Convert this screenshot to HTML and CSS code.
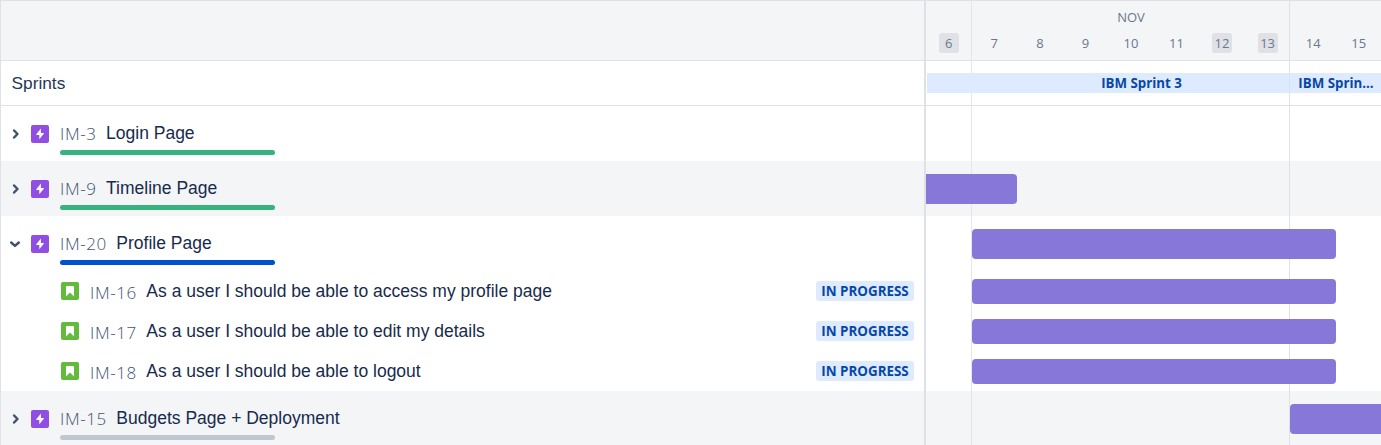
FILE: index.html
```html
<!DOCTYPE html>
<html lang="en">
<head>
<meta charset="utf-8">
<title>Roadmap</title>
<link rel="stylesheet" href="styles.css">
</head>
<body>
<svg class="defs" width="0" height="0" aria-hidden="true">
  <symbol id="right" viewBox="0 0 12 12"><path d="M5.100 2.500 8.500 6 5.100 9.500" fill="none" stroke="#42526e" stroke-width="2.5" stroke-linecap="round" stroke-linejoin="round"/></symbol>
  <symbol id="down" viewBox="0 0 12 12"><path d="M2.200 4.500 6 7.900 9.800 4.500" fill="none" stroke="#42526e" stroke-width="2.5" stroke-linecap="round" stroke-linejoin="round"/></symbol>
  <symbol id="epic" viewBox="0 0 18 18"><rect width="18" height="18" rx="2" fill="#904ee2"/><path d="M9.900 3.500v4.500h2.500q.9 0 .4.8l-4.500 5.500V10H5.700q-.8 0-.4-.8z" fill="#fff"/></symbol>
  <symbol id="story" viewBox="0 0 18 18"><rect width="18" height="18" rx="2" fill="#63ba3c"/><path d="M6 4h6q1 0 1 1v9.600L9 10.500 5 14.600V5q0-1 1-1z" fill="#fff"/></symbol>
</svg>
<main class="roadmap">
  <div class="row header">
    <div class="side"></div>
    <div class="track">
      <div class="month">NOV</div>
      <div class="days"><span><b>6</b></span><span>7</span><span>8</span><span>9</span><span>10</span><span>11</span><span><b>12</b></span><span><b>13</b></span><span>14</span><span>15</span></div>
    </div>
  </div>
  <div class="row sprints">
    <div class="side">Sprints</div>
    <div class="track"><div class="sprint first">IBM Sprint 3</div><div class="sprint second">IBM Sprin...</div></div>
  </div>
  <div class="row epic">
    <div class="side"><svg class="chev"><use href="#right"/></svg><svg class="type"><use href="#epic"/></svg>
      <div class="info"><div class="line"><span class="key">IM-3</span><span class="title">Login Page</span></div><div class="progress done"></div></div></div>
    <div class="track"></div>
  </div>
  <div class="row epic shade">
    <div class="side"><svg class="chev"><use href="#right"/></svg><svg class="type"><use href="#epic"/></svg>
      <div class="info"><div class="line"><span class="key">IM-9</span><span class="title">Timeline Page</span></div><div class="progress done"></div></div></div>
    <div class="track"><div class="bar from-start"></div></div>
  </div>
  <div class="row epic">
    <div class="side"><svg class="chev"><use href="#down"/></svg><svg class="type"><use href="#epic"/></svg>
      <div class="info"><div class="line"><span class="key">IM-20</span><span class="title">Profile Page</span></div><div class="progress active"></div></div></div>
    <div class="track"><div class="bar middle"></div></div>
  </div>
  <div class="row story">
    <div class="side"><svg class="type"><use href="#story"/></svg><span class="key">IM-16</span><span class="title">As a user I should be able to access my profile page</span><span class="status">IN PROGRESS</span></div>
    <div class="track"><div class="bar middle"></div></div>
  </div>
  <div class="row story">
    <div class="side"><svg class="type"><use href="#story"/></svg><span class="key">IM-17</span><span class="title">As a user I should be able to edit my details</span><span class="status">IN PROGRESS</span></div>
    <div class="track"><div class="bar middle"></div></div>
  </div>
  <div class="row story">
    <div class="side"><svg class="type"><use href="#story"/></svg><span class="key">IM-18</span><span class="title">As a user I should be able to logout</span><span class="status">IN PROGRESS</span></div>
    <div class="track"><div class="bar middle"></div></div>
  </div>
  <div class="row epic shade">
    <div class="side"><svg class="chev"><use href="#right"/></svg><svg class="type"><use href="#epic"/></svg>
      <div class="info"><div class="line"><span class="key">IM-15</span><span class="title">Budgets Page + Deployment</span></div><div class="progress todo"></div></div></div>
    <div class="track"><div class="bar late"></div></div>
  </div>
</main>
</body>
</html>
```
FILE: styles.css
```css
* { box-sizing: border-box; }
body { margin: 0; overflow: hidden; background: #fff; }
.defs { display: block; }
.roadmap {
  height: 445px;
  overflow: hidden;
  border-top: 1px solid #dfe1e6;
  border-left: 1px solid #dfe1e6;
  font-family: "Liberation Sans", Arial, sans-serif;
  font-size: 17.5px;
  color: #172b4d;
}
.row { display: grid; grid-template-columns: 925px 1fr; }
.side { display: flex; align-items: center; border-right: 2px solid #dfe1e6; min-width: 0; }
.track {
  display: flex;
  align-items: center;
  min-width: 0;
  overflow: hidden;
  background:
    linear-gradient(#e4e6ea, #e4e6ea) 45px 0 / 1px 100% no-repeat,
    linear-gradient(#dfe1e6, #dfe1e6) 363px 0 / 1px 100% no-repeat;
}
.shade { background-color: #f4f5f7; }

.header { height: 60px; background-color: #f4f5f7; border-bottom: 1px solid #dfe1e6; }
.header .track {
  display: block;
  font: 13px/20px "Open Sans", "Noto Sans", sans-serif;
  color: #6b778c;
}
.month { width: 410px; padding-top: 6px; text-align: center; }
.days { display: flex; margin-top: 6px; }
.days span { flex: 0 0 45.55px; text-align: center; line-height: 20px; }
.days b { display: inline-block; width: 20px; height: 20px; border-radius: 3px; background: #dfe1e6; font-weight: 400; }

.sprints { height: 45px; border-bottom: 1px solid #dfe1e6; }
.sprints .side { padding-left: 10.5px; color: #253858; font-size: 17.3px; }
.sprint {
  height: 20px;
  background: #deebff;
  color: #0747a6;
  font: 700 13.3px/20px "Open Sans", "Noto Sans", sans-serif;
  text-align: center;
  white-space: nowrap;
}
.sprint.first { flex: 0 0 362px; margin-left: 1px; padding-left: 67px; }
.sprint.second { flex: 1; margin-left: 1px; padding-left: 1px; }

.epic { height: 55px; }
.epic .side { align-items: flex-start; padding-left: 8px; }
.chev { width: 12px; height: 12px; margin-top: 22px; }
.type { width: 18px; height: 18px; flex: none; }
.epic .type { margin: 19px 11px 0 10px; }
.line { display: flex; height: 44px; line-height: 54px; white-space: nowrap; }
.key {
  margin-right: 9.5px;
  font-family: "Open Sans", "Noto Sans", sans-serif;
  font-size: 17px;
  font-weight: 300;
  letter-spacing: .6px;
  color: #42526e;
}
.epic .key { padding-top: 1px; }
.progress { width: 215px; height: 5px; border-radius: 3px; }
.done { background: #36b37e; }
.active { background: #0052cc; }
.todo { background: #c1c7d0; }

.story { height: 40px; }
.story .side { padding: 0 10px 0 60px; }
.story .key { margin-left: 11px; padding-top: 2px; }
.title { white-space: nowrap; }
.status {
  margin-left: auto;
  width: 98px;
  height: 20px;
  border-radius: 3px;
  background: #deebff;
  color: #0747a6;
  font: 700 13.4px/20px "Open Sans", "Noto Sans", sans-serif;
  text-align: center;
  white-space: nowrap;
}

.bar { flex: none; height: 25px; border-radius: 4px; background: #8777d9; }
.epic .bar { height: 30px; }
.from-start { width: 91px; border-radius: 0 4px 4px 0; }
.middle { width: 364px; margin-left: 46px; }
.late { width: 120px; margin-left: 364px; }
```
